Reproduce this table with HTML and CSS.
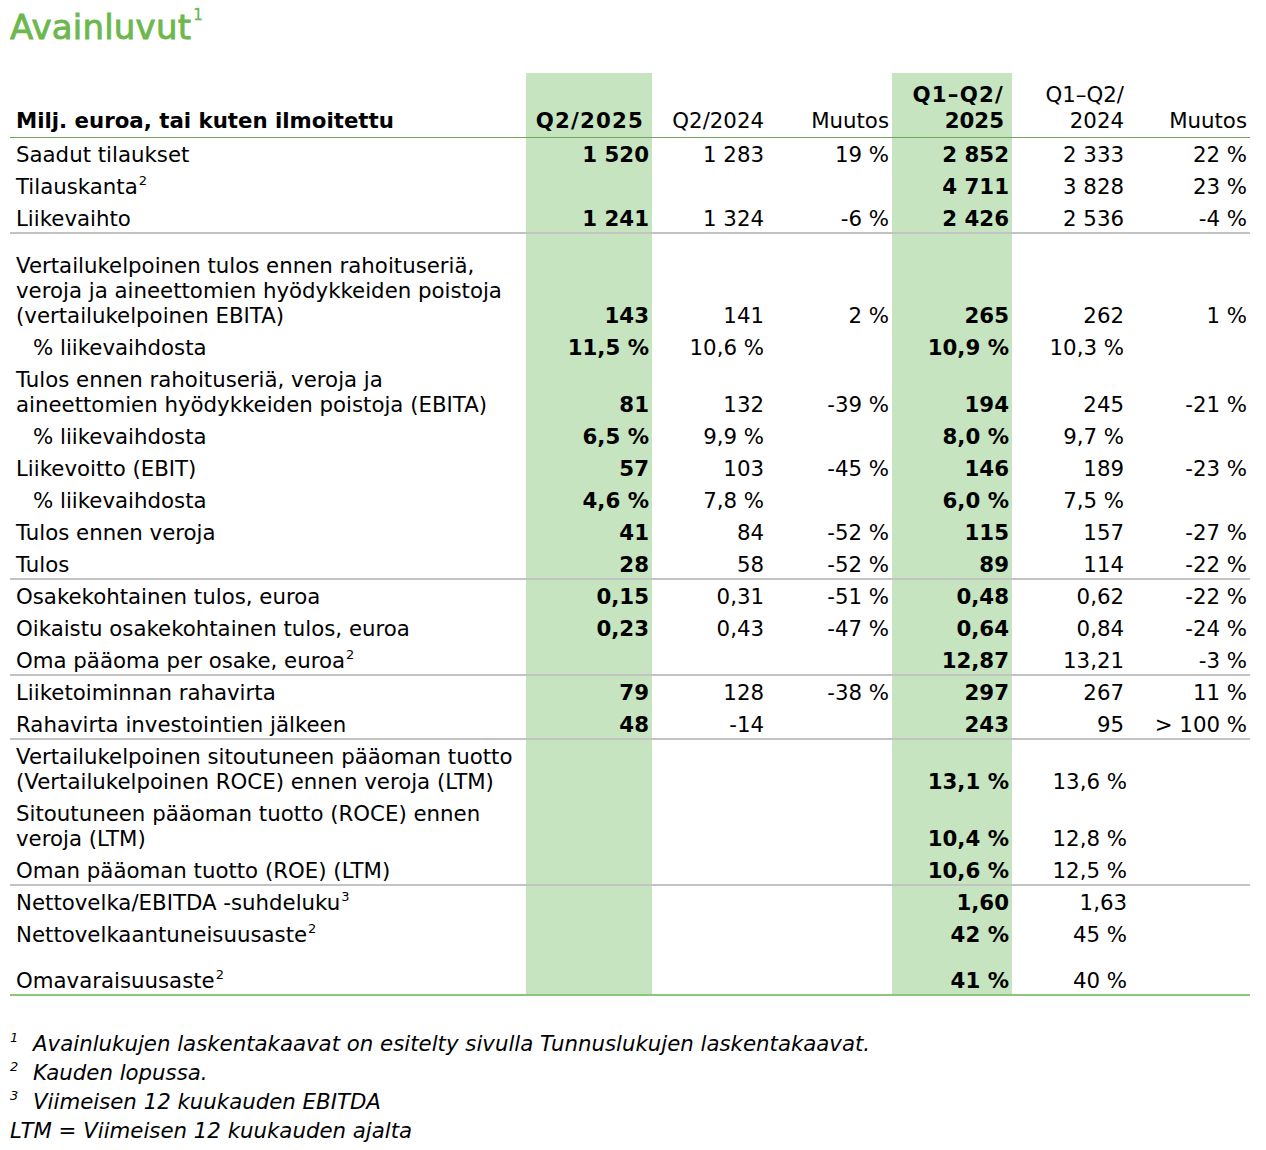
FILE: index.html
```html
<!DOCTYPE html>
<html lang="fi">
<head>
<meta charset="utf-8">
<title>Avainluvut</title>
<link rel="stylesheet" href="styles.css">
</head>
<body>
<h1 class="title">Avainluvut<sup class="title-fn">1</sup></h1>
<table class="kpi">
  <colgroup>
    <col class="c-label"><col class="c-q1"><col class="c-q2"><col class="c-q3"><col class="c-h1"><col class="c-h2"><col class="c-h3">
  </colgroup>
  <thead>
    <tr>
      <th class="lbl">Milj. euroa, tai kuten ilmoitettu</th>
      <th class="num hl b hq"><span class="qs">Q2/2025</span></th>
      <th class="num">Q2/2024</th>
      <th class="num">Muutos</th>
      <th class="num hl b hq"><span class="qs">Q1–Q2/</span><br>2025</th>
      <th class="num">Q1–Q2/<br>2024</th>
      <th class="num">Muutos</th>
    </tr>
  </thead>
  <tbody>
    <tr><td class="lbl">Saadut tilaukset</td><td class="num hl b">1 520</td><td class="num">1 283</td><td class="num">19 %</td><td class="num hl b">2 852</td><td class="num">2 333</td><td class="num">22 %</td></tr>
    <tr><td class="lbl">Tilauskanta<sup class="fn">2</sup></td><td class="num hl b"></td><td class="num"></td><td class="num"></td><td class="num hl b">4 711</td><td class="num">3 828</td><td class="num">23 %</td></tr>
    <tr class="sep"><td class="lbl">Liikevaihto</td><td class="num hl b">1 241</td><td class="num">1 324</td><td class="num">-6 %</td><td class="num hl b">2 426</td><td class="num">2 536</td><td class="num">-4 %</td></tr>
    <tr class="gap gap-a"><td></td><td class="hl"></td><td></td><td></td><td class="hl"></td><td></td><td></td></tr>
    <tr><td class="lbl">Vertailukelpoinen tulos ennen rahoituseriä,<br>veroja ja aineettomien hyödykkeiden poistoja<br>(vertailukelpoinen EBITA)</td><td class="num hl b">143</td><td class="num">141</td><td class="num">2 %</td><td class="num hl b">265</td><td class="num">262</td><td class="num">1 %</td></tr>
    <tr><td class="lbl ind">% liikevaihdosta</td><td class="num hl b">11,5 %</td><td class="num">10,6 %</td><td class="num"></td><td class="num hl b">10,9 %</td><td class="num">10,3 %</td><td class="num"></td></tr>
    <tr><td class="lbl">Tulos ennen rahoituseriä, veroja ja<br>aineettomien hyödykkeiden poistoja (EBITA)</td><td class="num hl b">81</td><td class="num">132</td><td class="num">-39 %</td><td class="num hl b">194</td><td class="num">245</td><td class="num">-21 %</td></tr>
    <tr><td class="lbl ind">% liikevaihdosta</td><td class="num hl b">6,5 %</td><td class="num">9,9 %</td><td class="num"></td><td class="num hl b">8,0 %</td><td class="num">9,7 %</td><td class="num"></td></tr>
    <tr><td class="lbl">Liikevoitto (EBIT)</td><td class="num hl b">57</td><td class="num">103</td><td class="num">-45 %</td><td class="num hl b">146</td><td class="num">189</td><td class="num">-23 %</td></tr>
    <tr><td class="lbl ind">% liikevaihdosta</td><td class="num hl b">4,6 %</td><td class="num">7,8 %</td><td class="num"></td><td class="num hl b">6,0 %</td><td class="num">7,5 %</td><td class="num"></td></tr>
    <tr><td class="lbl">Tulos ennen veroja</td><td class="num hl b">41</td><td class="num">84</td><td class="num">-52 %</td><td class="num hl b">115</td><td class="num">157</td><td class="num">-27 %</td></tr>
    <tr class="sep"><td class="lbl">Tulos</td><td class="num hl b">28</td><td class="num">58</td><td class="num">-52 %</td><td class="num hl b">89</td><td class="num">114</td><td class="num">-22 %</td></tr>
    <tr><td class="lbl">Osakekohtainen tulos, euroa</td><td class="num hl b">0,15</td><td class="num">0,31</td><td class="num">-51 %</td><td class="num hl b">0,48</td><td class="num">0,62</td><td class="num">-22 %</td></tr>
    <tr><td class="lbl">Oikaistu osakekohtainen tulos, euroa</td><td class="num hl b">0,23</td><td class="num">0,43</td><td class="num">-47 %</td><td class="num hl b">0,64</td><td class="num">0,84</td><td class="num">-24 %</td></tr>
    <tr class="sep"><td class="lbl">Oma pääoma per osake, euroa<sup class="fn">2</sup></td><td class="num hl b"></td><td class="num"></td><td class="num"></td><td class="num hl b">12,87</td><td class="num">13,21</td><td class="num">-3 %</td></tr>
    <tr><td class="lbl">Liiketoiminnan rahavirta</td><td class="num hl b">79</td><td class="num">128</td><td class="num">-38 %</td><td class="num hl b">297</td><td class="num">267</td><td class="num">11 %</td></tr>
    <tr class="sep"><td class="lbl">Rahavirta investointien jälkeen</td><td class="num hl b">48</td><td class="num">-14</td><td class="num"></td><td class="num hl b">243</td><td class="num">95</td><td class="num">&gt; 100 %</td></tr>
    <tr><td class="lbl">Vertailukelpoinen sitoutuneen pääoman tuotto<br>(Vertailukelpoinen ROCE) ennen veroja (LTM)</td><td class="num hl b"></td><td class="num"></td><td class="num"></td><td class="num hl b">13,1 %</td><td class="num pad4">13,6 %</td><td class="num"></td></tr>
    <tr><td class="lbl">Sitoutuneen pääoman tuotto (ROCE) ennen<br>veroja (LTM)</td><td class="num hl b"></td><td class="num"></td><td class="num"></td><td class="num hl b">10,4 %</td><td class="num pad4">12,8 %</td><td class="num"></td></tr>
    <tr class="sep"><td class="lbl">Oman pääoman tuotto (ROE) (LTM)</td><td class="num hl b"></td><td class="num"></td><td class="num"></td><td class="num hl b">10,6 %</td><td class="num pad4">12,5 %</td><td class="num"></td></tr>
    <tr><td class="lbl">Nettovelka/EBITDA -suhdeluku<sup class="fn">3</sup></td><td class="num hl b"></td><td class="num"></td><td class="num"></td><td class="num hl b">1,60</td><td class="num pad4">1,63</td><td class="num"></td></tr>
    <tr><td class="lbl">Nettovelkaantuneisuusaste<sup class="fn">2</sup></td><td class="num hl b"></td><td class="num"></td><td class="num"></td><td class="num hl b">42 %</td><td class="num pad4">45 %</td><td class="num"></td></tr>
    <tr class="gap gap-b"><td></td><td class="hl"></td><td></td><td></td><td class="hl"></td><td></td><td></td></tr>
    <tr class="last"><td class="lbl">Omavaraisuusaste<sup class="fn">2</sup></td><td class="num hl b"></td><td class="num"></td><td class="num"></td><td class="num hl b">41 %</td><td class="num pad4">40 %</td><td class="num"></td></tr>
  </tbody>
</table>
<div class="notes">
  <p class="note"><sup class="nfn">1</sup><span class="ntext">Avainlukujen laskentakaavat on esitelty sivulla Tunnuslukujen laskentakaavat.</span></p>
  <p class="note"><sup class="nfn">2</sup><span class="ntext">Kauden lopussa.</span></p>
  <p class="note"><sup class="nfn">3</sup><span class="ntext">Viimeisen 12 kuukauden EBITDA</span></p>
  <p class="note">LTM = Viimeisen 12 kuukauden ajalta</p>
</div>
</body>
</html>
```
FILE: styles.css
```css
html, body {
  margin: 0;
  padding: 0;
  background: #ffffff;
}
body {
  padding: 0 16px 0 10px;
  font-family: "DejaVu Sans", Verdana, sans-serif;
  color: #000000;
}
.title {
  margin: 0;
  padding-top: 7px;
  height: 66px;
  font-size: 34px;
  line-height: 40px;
  font-weight: normal;
  color: #6cb84e;
  -webkit-text-stroke: 0.9px #6cb84e;
  letter-spacing: 0.2px;
}
.title-fn {
  font-size: 15px;
  line-height: 0;
  vertical-align: baseline;
  position: relative;
  top: -19px;
  margin-left: 2px;
  -webkit-text-stroke: 0.3px #6cb84e;
}
.kpi {
  border-collapse: collapse;
  width: 1240px;
  table-layout: fixed;
  font-size: 21.3px;
  line-height: 25px;
}
.c-label { width: 516px; }
.c-q1 { width: 126px; }
.c-q2 { width: 115px; }
.c-q3 { width: 125px; }
.c-h1 { width: 120px; }
.c-h2 { width: 115px; }
.c-h3 { width: 123px; }

.kpi th {
  font-weight: normal;
  line-height: 26px;
  padding: 9px 3px 3px 3px;
  vertical-align: bottom;
  border-bottom: 1px solid #6fa85c;
  white-space: nowrap;
}
.kpi th.lbl {
  text-align: left;
  font-weight: bold;
  padding-left: 6px;
}
.kpi th.hq { padding-right: 8px; }
.qs { letter-spacing: 1.2px; }
.kpi td {
  padding: 3.5px 3px;
  vertical-align: bottom;
  white-space: nowrap;
}
.kpi td.lbl {
  text-align: left;
  padding-left: 6px;
  vertical-align: top;
}
.kpi td.ind { padding-left: 23px; }
.num { text-align: right; }
.kpi td.pad4 { padding-right: 0; }
.b { font-weight: bold; }
.kpi th.b { font-weight: bold; }
.hl { background: #c6e4c0; }

.kpi .sep td {
  border-bottom: 2px solid #c3c3c3;
  padding-bottom: 1.5px;
}
.kpi .last td {
  border-bottom: 2px solid #8cc67a;
  padding-bottom: 1.5px;
}
.kpi tr.gap td {
  padding: 0;
  line-height: 0;
}
.gap-a td { height: 15px; }
.gap-b td { height: 14px; }

.fn {
  font-size: 13px;
  line-height: 0;
  vertical-align: baseline;
  position: relative;
  top: -9px;
  margin-left: 1px;
}

.notes {
  margin-top: 33px;
  font-style: italic;
  font-size: 21.3px;
  line-height: 29px;
}
.note {
  margin: 0;
  white-space: nowrap;
}
.nfn {
  display: inline-block;
  width: 23px;
  font-size: 13px;
  line-height: 0;
  vertical-align: baseline;
  position: relative;
  top: -9px;
}
```
